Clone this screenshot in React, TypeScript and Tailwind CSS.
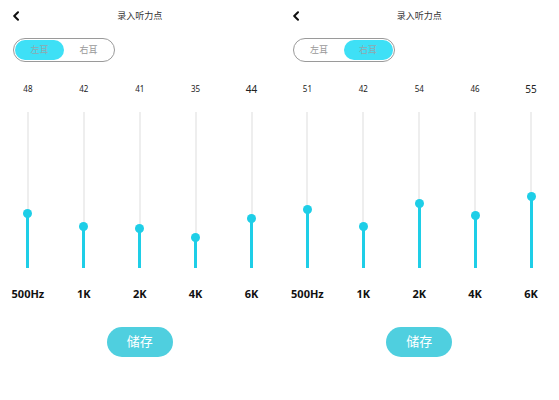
import React from "react";

const freqs = ["500Hz", "1K", "2K", "4K", "6K"];

// thumb centre measured from the track top (track spans 156px)
const screens = [
	{
		ear: "left",
		points: [
			{ value: "48", y: 101 },
			{ value: "42", y: 114 },
			{ value: "41", y: 116 },
			{ value: "35", y: 125 },
			{ value: "44", y: 106, big: true },
		],
	},
	{
		ear: "right",
		points: [
			{ value: "51", y: 97 },
			{ value: "42", y: 114 },
			{ value: "54", y: 91 },
			{ value: "46", y: 103 },
			{ value: "55", y: 84, big: true },
		],
	},
];

function Chevron() {
	return (
		<svg width="8" height="10" viewBox="0 0 8 10" fill="none">
			<path d="M6 1.2L2.2 5L6 8.8" stroke="#111" strokeWidth="2" strokeLinecap="round" strokeLinejoin="round" />
		</svg>
	);
}

function EarToggle({ ear }: { ear: string }) {
	const on = "bg-[#3ee0f6] text-[#8fa9b0] rounded-full";
	const off = "text-[#9a9a9a]";
	return (
		<div className="ml-[13px] mt-[14px] flex h-[24px] w-[102px] items-center rounded-full border border-[#9a9a9a] p-[1px]">
			<div className={`flex h-full w-1/2 items-center justify-center text-[9px] ${ear === "left" ? on : off}`}>左耳</div>
			<div className={`flex h-full w-1/2 items-center justify-center text-[9px] ${ear === "right" ? on : off}`}>右耳</div>
		</div>
	);
}

function Slider({ value, y, big, label }: { value: string; y: number; big?: boolean; label: string }) {
	return (
		<div className="flex w-1/5 flex-col items-center">
			<div className={`flex h-[14px] items-center text-[#222] ${big ? "text-[10px]" : "text-[8px]"}`}>{value}</div>
			<div className="relative mt-[16px] flex h-[156px] w-[8px] justify-center">
				<div className="h-full w-[2px] bg-[#eeeeee]" />
				<div className="absolute bottom-0 w-[3px] bg-[#1ecee7]" style={{ height: 156 - y }} />
				<div className="absolute h-[9px] w-[9px] rounded-full bg-[#1ecee7]" style={{ top: y - 4.5 }} />
			</div>
			<div className="mt-[19px] flex h-[14px] items-center text-[11px] font-bold text-[#111]">{label}</div>
		</div>
	);
}

function Screen({ ear, points }: { ear: string; points: { value: string; y: number; big?: boolean }[] }) {
	return (
		<div className="flex w-1/2 flex-col bg-white">
			<div className="relative mt-[8px] flex h-[16px] items-center justify-center">
				<div className="absolute left-[12px] top-[3px]">
					<Chevron />
				</div>
				<span className="text-[9px] text-[#333]">录入听力点</span>
			</div>
			<EarToggle ear={ear} />
			<div className="mt-[20px] flex">
				{points.map((p, i) => (
					<Slider key={i} value={p.value} y={p.y} big={p.big} label={freqs[i]} />
				))}
			</div>
			<div className="mt-[26px] flex justify-center">
				<button className="h-[30px] w-[66px] rounded-full bg-[#4fcfdf] text-[13px] text-white">储存</button>
			</div>
		</div>
	);
}

export default function App() {
	return (
		<div
			className="flex h-[400px] w-[559px] bg-white"
			style={{ fontFamily: '"Noto Sans", "Noto Sans CJK SC", sans-serif' }}
		>
			{screens.map((s) => (
				<Screen key={s.ear} ear={s.ear} points={s.points} />
			))}
		</div>
	);
}
